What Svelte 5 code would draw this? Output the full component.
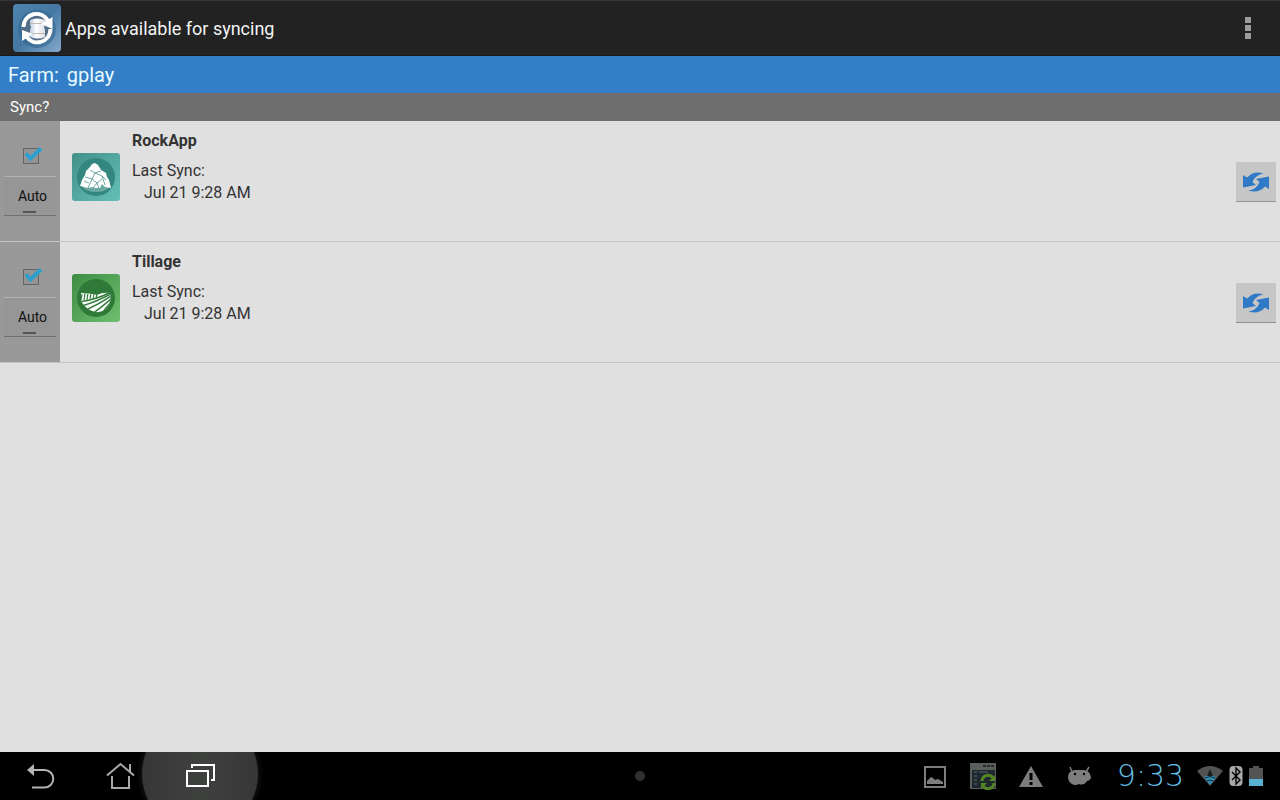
<script>
  let apps = $state([
    { id: 'rock', name: 'RockApp', last: 'Jul 21 9:28 AM', sync: true, auto: false },
    { id: 'tillage', name: 'Tillage', last: 'Jul 21 9:28 AM', sync: true, auto: false }
  ]);
</script>

<div class="screen">
  <header class="bar">
    <svg class="logo" viewBox="0 0 48 48" aria-hidden="true">
      <defs>
        <linearGradient id="logoBg" x1="0" y1="0" x2="1" y2="1">
          <stop offset="0" stop-color="#4d84ae" />
          <stop offset="0.5" stop-color="#4478a3" />
          <stop offset="1" stop-color="#86aacb" />
        </linearGradient>
        <linearGradient id="barrel" x1="0" y1="0" x2="1" y2="0">
          <stop offset="0" stop-color="#b9cbe0" />
          <stop offset="0.4" stop-color="#ffffff" />
          <stop offset="1" stop-color="#dcdfe6" />
        </linearGradient>
      </defs>
      <rect width="48" height="48" rx="4" fill="url(#logoBg)" />
      <circle cx="24" cy="25" r="19" fill="#31648f" opacity="0.6" />
      <circle cx="24" cy="24" r="16" fill="#536f88" />
      <path d="M17 16q7-3 15 0v5l-1 2 1 3v7q-7 3-15 0v-7l1-3-1-2z" fill="url(#barrel)" />
      <path d="M17 19.500h15M18 29.500h14" stroke="#c3b9b3" stroke-width="1" />
      <path d="M10.500 23C11 9 28 5 35 17" fill="none" stroke="#fff" stroke-width="4" />
      <path d="M39.500 13v12L28 20z" fill="#fff" />
      <path d="M37.500 25C37 39 20 43 13 32" fill="none" stroke="#fff" stroke-width="4" />
      <path d="M9 37V26l11 4z" fill="#fff" />
    </svg>
    <h1>Apps available for syncing</h1>
    <button class="more" aria-label="More options"><i></i><i></i><i></i></button>
  </header>

  <div class="farm"><span>Farm:</span><span>gplay</span></div>
  <div class="columns">Sync?</div>

  <main>
    {#each apps as app (app.id)}
      <section class="row">
        <div class="side">
          <label class="tick">
            <input type="checkbox" bind:checked={app.sync} aria-label={`Sync ${app.name}`} />
            <svg viewBox="0 0 22 22" aria-hidden="true">
              <rect x="2.500" y="3.500" width="15" height="15" fill="#949494" stroke="#646464" />
              {#if app.sync}
                <path d="M5 8.500l4.500 5L20 3.500" fill="none" stroke="#2b9fce" stroke-width="4" />
              {/if}
            </svg>
          </label>
          <button class="auto" aria-pressed={app.auto} onclick={() => (app.auto = !app.auto)}>
            Auto<i></i>
          </button>
        </div>

        {#if app.id === 'rock'}
          <svg class="icon" viewBox="0 0 48 48" aria-hidden="true">
            <defs>
              <linearGradient id="teal" x1="0" y1="0" x2="1" y2="1">
                <stop offset="0" stop-color="#429188" />
                <stop offset="1" stop-color="#65bfb7" />
              </linearGradient>
            </defs>
            <rect width="48" height="48" rx="3" fill="url(#teal)" />
            <circle cx="24" cy="24" r="19" fill="#33877f" />
            <ellipse cx="24" cy="32" rx="14" ry="7" fill="#6aa9a3" />
            <path d="M23 10l3 2 3 5 5 3 1 4 2 3 2 8-6-1-3-3-2 4h-5l-3-1-4 1-8-2 2-6 3-5 1-4 4-4 2-3z" fill="#fff" />
            <path d="M18 17l5 3 6-2M13 24l7 2 3-6 7 3 4 4M20 26l-4 9M20 26l5 4 5-4M25 30l-4 5M25 30l2 6M30 23l3 9M12 28l5 2" fill="none" stroke="#4c958e" stroke-width="0.8" />
          </svg>
        {:else}
          <svg class="icon" viewBox="0 0 48 48" aria-hidden="true">
            <defs>
              <linearGradient id="green" x1="0" y1="0" x2="1" y2="1">
                <stop offset="0" stop-color="#3c8c42" />
                <stop offset="1" stop-color="#6fbf70" />
              </linearGradient>
              <clipPath id="field"><path d="M9 19q9 0 16 2 6-3 13-2 2 9-4 16-6 5-14 2-9-4-11-11z" /></clipPath>
            </defs>
            <rect width="48" height="48" rx="3" fill="url(#green)" />
            <circle cx="24" cy="24" r="19" fill="#2f7a38" />
            <g clip-path="url(#field)">
              <rect x="8" y="16" width="32" height="24" fill="#fff" />
              <path d="M8 27.500q14-1 30-9M10 32q14-4 29-12M14 36q13-6 25-14M20 40q11-8 20-16M28 41q6-7 12-14" fill="none" stroke="#2f7a38" stroke-width="1.500" />
              <path d="M10 20l-1 6M13 19l-1 7M16 19l-1 7M19 19l-1 6M22 20l-1 5M25 20l-1 4" stroke="#2f7a38" stroke-width="1.200" />
            </g>
          </svg>
        {/if}

        <div class="info">
          <h2>{app.name}</h2>
          <p>Last Sync:</p>
          <p class="date">{app.last}</p>
        </div>

        <button class="sync" aria-label={`Sync ${app.name} now`}>
          <svg viewBox="0 0 28 22" aria-hidden="true">
            <path d="M1 4v12.500L14 14l-3.500-3Q13 4 21.500 2.500 12-1 5 6.500z" fill="#3079c6" />
            <path d="M27 18V5.500L14 8l3.500 3Q15 18 6.500 19.500 16 23 23 15.500z" fill="#3079c6" />
          </svg>
        </button>
      </section>
    {/each}
  </main>

  <footer>
    <nav>
      <button aria-label="Back">
        <svg viewBox="0 0 32 32" aria-hidden="true">
          <path d="M9 10h11.500a8.500 8.500 0 0 1 0 17.500H8" fill="none" stroke="#b4b4b4" stroke-width="2" />
          <path d="M3 10l7-6v12z" fill="#b4b4b4" />
        </svg>
      </button>
      <button aria-label="Home">
        <svg viewBox="0 0 32 32" aria-hidden="true">
          <path d="M3 15.500L16.500 4 30 15.500M26 12V4M8 16v12h17V16" fill="none" stroke="#a9a9a9" stroke-width="2" />
        </svg>
      </button>
      <button class="recent" aria-label="Recent apps">
        <svg viewBox="0 0 32 32" aria-hidden="true">
          <path d="M3 11h21v15H3zM8 8V5h22v15h-3" fill="none" stroke="#fff" stroke-width="2" />
        </svg>
      </button>
    </nav>
    <span class="dot"></span>
    <div class="status">
      <svg class="note" viewBox="0 0 28 28" aria-hidden="true">
        <rect x="4" y="5" width="20" height="20" fill="none" stroke="#7d7d7d" stroke-width="2" />
        <path d="M6 22v-3l4-4 2 1 2 2 3-1 5 3v2z" fill="#7d7d7d" />
      </svg>
      <svg class="note" viewBox="0 0 28 28" aria-hidden="true">
        <rect x="1" y="1" width="26" height="26" fill="#5b5f5b" />
        <rect x="3" y="8" width="23" height="18" fill="#20282f" />
        <path d="M14 4h3M18 4h3M22 4h3" stroke="#282c28" stroke-width="2" />
        <path d="M5 10h3M5 14h3M5 18h3M5 22h3M10 10h9" stroke="#46525c" stroke-width="1.500" />
        <path d="M13 19a6 6 0 0 1 11-3M25 21a6 6 0 0 1-11 3" fill="none" stroke="#538523" stroke-width="3" />
        <path d="M26 13v6h-6zM12 27v-6h6z" fill="#538523" />
      </svg>
      <svg class="note" viewBox="0 0 28 28" aria-hidden="true">
        <path d="M14 4l12 21H2z" fill="#7d7d7d" />
        <path d="M14 11v7M14 20v3" stroke="#000" stroke-width="3" />
      </svg>
      <svg class="note" viewBox="0 0 28 28" aria-hidden="true">
        <path d="M3 15q0-6 7-7h9q6 1 7 7 0 3-4 4-3 5-8 3-4 2-7 0-4-2-4-7z" fill="#7d7d7d" />
        <path d="M7 10L5 5M21 10l3-5" stroke="#7d7d7d" stroke-width="1.500" />
        <circle cx="10" cy="12" r="1.200" /><circle cx="19" cy="12" r="1.200" />
      </svg>
      <time>9:33</time>
      <svg class="wifi" viewBox="0 0 26 22" aria-hidden="true">
        <path d="M0 6Q13-4 26 6L13 21z" fill="#535353" />
        <path d="M7 12q6-4 12 0l-6 8z" fill="#2e8fb8" />
        <path d="M10 11l3-7 3 7z" fill="#181c1e" />
        <path d="M8 13q5-3 10 0M10 16q3-2 6 0" fill="none" stroke="#14252d" stroke-width="1" />
      </svg>
      <svg class="blue" viewBox="0 0 14 22" aria-hidden="true">
        <rect x="0.500" y="1" width="13" height="20" rx="4" fill="#a8a8a8" />
        <path d="M3 7l8 8-4 4V3l4 4-8 8" fill="none" stroke="#000" stroke-width="1.400" />
      </svg>
      <svg class="blue" viewBox="0 0 14 22" aria-hidden="true">
        <path d="M0 3h4V1h6v2h4v11H0z" fill="#535353" />
        <rect y="14" width="14" height="7" fill="#58b0d0" />
      </svg>
    </div>
  </footer>
</div>

<style>
  :global(body) { margin: 0; }
  * { box-sizing: border-box; }
  .screen {
    display: flex;
    flex-direction: column;
    min-height: 100vh;
    background: #e0e0e0;
    font-family: Roboto, sans-serif;
    color: #333;
  }
  button { border: 0; padding: 0; background: none; font: inherit; cursor: pointer; }
  svg { display: block; flex: none; }
  h1, h2, p { margin: 0; }

  .bar {
    display: flex;
    align-items: center;
    gap: 4px;
    min-height: 56px;
    padding: 0 16px 0 13px;
    background: #222;
    border-top: 1px solid #353535;
    border-bottom: 1px solid #1a1a1a;
    color: #f3f3f3;
  }
  .logo { width: 48px; height: 48px; }
  h1 { flex: 1; padding-top: 2px; font-size: 18px; line-height: 24px; font-weight: 400; }
  .more { display: flex; flex-direction: column; align-items: center; gap: 2px; width: 32px; }
  .more i { width: 6px; height: 6px; background: #9b9b9b; }

  .farm {
    display: flex;
    gap: 8px;
    padding: 7px 8px 5px;
    background: #337ec6;
    color: #e6fbff;
    font-size: 20px;
    line-height: 25px;
  }
  .columns {
    padding: 4px 10px;
    background: #6e6e6e;
    color: #fff;
    font-size: 15px;
    line-height: 20px;
  }

  main { flex: 1; }
  .row { display: flex; min-height: 121px; border-bottom: 1px solid #c4c4c4; }
  .side {
    display: flex;
    flex-direction: column;
    align-items: center;
    gap: 9px;
    width: 60px;
    padding: 24px 4px 0;
    background: #999;
  }
  .tick { position: relative; width: 22px; height: 22px; margin-left: 4px; }
  .tick input { position: absolute; inset: 0; margin: 0; width: 100%; height: 100%; opacity: 0; }
  .tick svg { width: 22px; height: 22px; }
  .auto {
    display: flex;
    flex-direction: column;
    align-items: center;
    justify-content: flex-end;
    width: 52px;
    height: 40px;
    padding: 0 0 2px 5px;
    border-top: 1px solid #b0b0b0;
    border-bottom: 1px solid #707070;
    background: #969696;
    color: #111;
    font-size: 14px;
    line-height: 18px;
  }
  .auto i { width: 13px; height: 2px; margin: 6px 6px 0 0; background: #555; }
  .icon { width: 48px; height: 48px; margin: 32px 12px 0; }
  .info { flex: 1; padding-top: 9px; font-size: 16px; line-height: 22px; }
  h2 { margin-bottom: 8px; font-size: 16px; line-height: 22px; font-weight: 700; }
  .date { padding-left: 12px; }
  .sync {
    display: flex;
    align-items: center;
    justify-content: center;
    width: 40px;
    height: 40px;
    margin: 41px 4px 0 0;
    background: #c6c6c6;
    border-bottom: 1px solid #929292;
  }
  .sync svg { width: 28px; height: 22px; }

  footer {
    display: grid;
    grid-template-columns: 1fr auto 1fr;
    align-items: center;
    height: 48px;
    overflow: hidden;
    background: #000;
  }
  nav { display: flex; }
  nav button { display: flex; align-items: center; justify-content: center; width: 80px; height: 48px; }
  nav svg { position: relative; width: 32px; height: 32px; }
  .recent { position: relative; }
  .recent::before {
    content: '';
    position: absolute;
    left: -18px;
    top: -36px;
    width: 116px;
    height: 116px;
    border-radius: 50%;
    background: linear-gradient(90deg, #363636, #3e403e 45%, #3e403e 55%, #363636);
    box-shadow: 0 0 6px #222;
  }
  .dot { width: 10px; height: 10px; border-radius: 50%; background: #303030; }
  .status { display: flex; align-items: center; justify-content: flex-end; padding-right: 17px; }
  .note { width: 28px; height: 28px; margin-right: 20px; }
  time {
    min-width: 75px;
    text-align: center;
    color: #63bfe3;
    font-family: "DejaVu Sans", sans-serif;
    font-weight: 200;
    font-size: 30px;
    line-height: 48px;
  }
  .wifi { width: 26px; height: 22px; margin: 0 6px 0 9px; }
  .blue { width: 14px; height: 22px; }
  .blue + .blue { margin-left: 6px; }
</style>
